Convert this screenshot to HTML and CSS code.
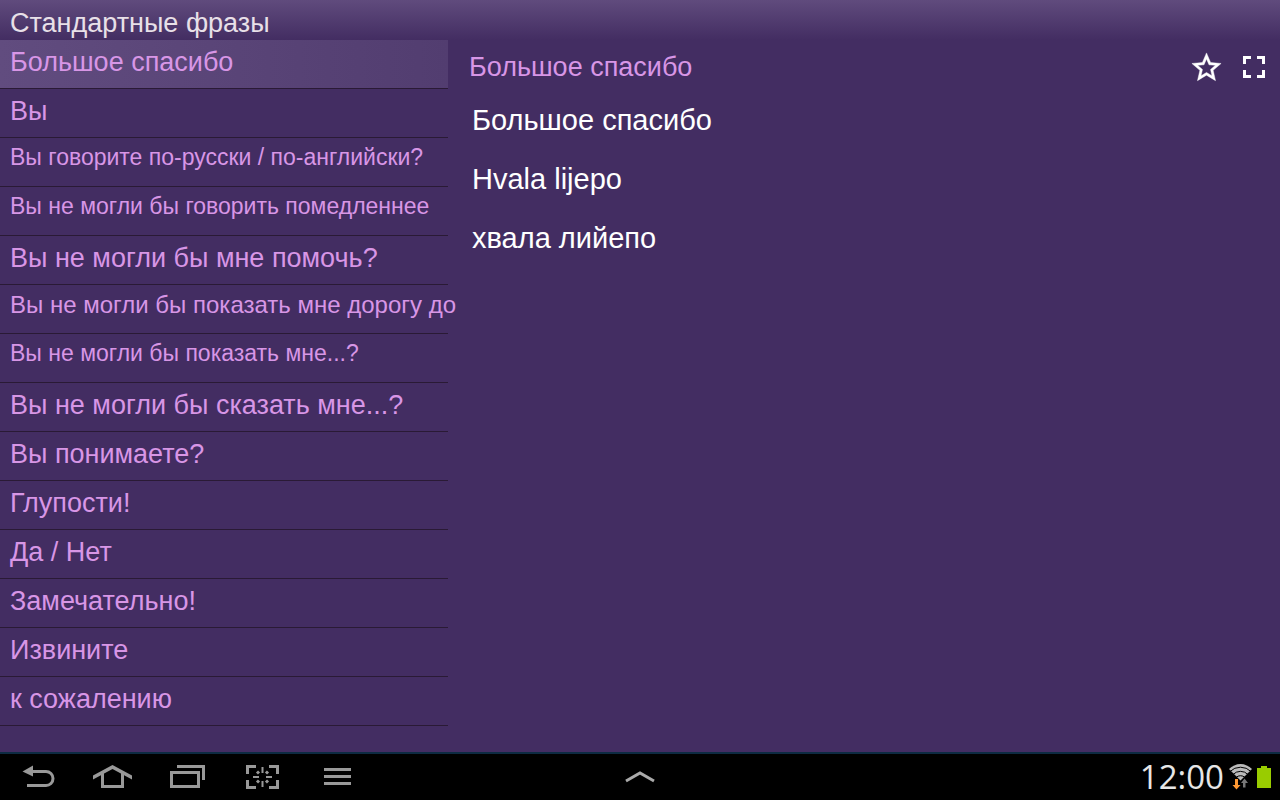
FILE: index.html
```html
<!DOCTYPE html>
<html lang="ru">
<head>
    <meta charset="UTF-8">
    <meta name="viewport" content="width=device-width, initial-scale=1.0">
    <link rel="stylesheet" href="styles.css">
    <title>Стандартные фразы</title>
</head>
<body>
    <header class="app-header">
        <h1>Стандартные фразы</h1>
    </header>
    <main class="content">
        <nav class="phrases">
            <ul>
                <li><a href="#" class="active">Большое спасибо</a></li>
                <li><a href="#">Вы</a></li>
                <li><a href="#" class="small">Вы говорите по-русски / по-английски?</a></li>
                <li><a href="#" class="small">Вы не могли бы говорить помедленнее</a></li>
                <li><a href="#">Вы не могли бы мне помочь?</a></li>
                <li><a href="#" class="medium">Вы не могли бы показать мне дорогу до</a></li>
                <li><a href="#" class="small">Вы не могли бы показать мне...?</a></li>
                <li><a href="#">Вы не могли бы сказать мне...?</a></li>
                <li><a href="#">Вы понимаете?</a></li>
                <li><a href="#">Глупости!</a></li>
                <li><a href="#">Да / Нет</a></li>
                <li><a href="#">Замечательно!</a></li>
                <li><a href="#">Извините</a></li>
                <li><a href="#">к сожалению</a></li>
            </ul>
        </nav>
        <section class="detail">
            <div class="detail-header">
                <h2>Большое спасибо</h2>
                <button type="button" aria-label="В избранное">
                    <svg width="35" height="35" viewBox="0 0 24 24" fill="#fff" stroke="#fff" stroke-width=".3"><path d="M22 9.24l-7.19-.62L12 2 9.19 8.63 2 9.24l5.46 4.73L5.82 21 12 17.27 18.18 21l-1.63-7.03L22 9.24zM12 15.4l-3.76 2.27 1-4.28-3.32-2.88 4.38-.38L12 6.1l1.71 4.04 4.38.38-3.32 2.88 1 4.28L12 15.4z"/></svg>
                </button>
                <button type="button" aria-label="На весь экран">
                    <svg width="22" height="22" viewBox="0 0 22 22" fill="none" stroke="#fff" stroke-width="3"><path d="M1.5 8V1.5H8M14 1.500h6.5V8M20.5 14v6.5H14M8 20.5H1.5V14"/></svg>
                </button>
            </div>
            <div class="translation">
                <p>Большое спасибо</p>
                <p>Hvala lijepo</p>
                <p>хвала лийепо</p>
            </div>
        </section>
    </main>
    <footer class="system-bar">
        <div class="nav-buttons">
            <button type="button" aria-label="Назад">
                <svg width="39" height="28" viewBox="0 0 39 28">
                    <path d="M13 8.5H28a7 7 0 0 1 0 14H9" fill="none" stroke="#999" stroke-width="3"/>
                    <path d="M4.5 8.5L15 2.5v11z" fill="#999"/>
                </svg>
            </button>
            <button type="button" aria-label="Домой">
                <svg width="39" height="28" viewBox="0 0 39 28">
                    <path d="M0 12.5L19.5 2 39 12.5v4L19.5 6 0 16.5z" fill="#999"/>
                    <path d="M9.5 10v13.5h20V10" fill="none" stroke="#999" stroke-width="3"/>
                </svg>
            </button>
            <button type="button" aria-label="Недавние">
                <svg width="39" height="28" viewBox="0 0 39 28" fill="none" stroke="#999" stroke-width="3">
                    <path d="M3.5 9.5h27v14h-27zM9 3.5h26.500V17"/>
                </svg>
            </button>
            <button type="button" aria-label="Снимок экрана">
                <svg width="39" height="28" viewBox="0 0 39 28" fill="none" stroke="#999">
                    <path d="M4.5 11V3.5H13M26 3.5h8.500V11M34.5 17v7.500H26M13 24.500H4.5V17" stroke-width="3"/>
                    <path d="M19.5 4v6M19.5 18v6M10 14h6M23 14h6" stroke-width="2"/>
                    <path d="M14 8.500l2 2M25 8.500l-2 2M14 19.500l2-2M25 19.500l-2-2" stroke-width="3"/>
                </svg>
            </button>
            <button type="button" aria-label="Меню">
                <svg width="39" height="28" viewBox="0 0 39 28" fill="#999">
                    <path d="M6 5h27v3H6zM6 12h27v3H6zM6 19h27v3H6z"/>
                </svg>
            </button>
        </div>
        <button type="button" aria-label="Развернуть">
            <svg width="32" height="14" viewBox="0 0 32 14" fill="none" stroke="#aaa" stroke-width="3">
                <path d="M2 11L16 3l14 8"/>
            </svg>
        </button>
        <div class="status">
            <time>12:00</time>
            <svg width="23" height="26" viewBox="0 0 23 26">
                <path d="M0 5a16 16 0 0 1 23 0L11.5 16.500z" fill="#bbb"/>
                <path d="M1 7.500a15 15 0 0 1 21 0M4 10.500a10.500 10.500 0 0 1 15 0M7 13.500a6.500 6.500 0 0 1 9 0" fill="none" stroke="#000"/>
                <path d="M6 15h3v6h2.500l-4 4.500-4-4.500H6z" fill="#f93"/>
                <path d="M14 23.500h2.500V19H19l-3.500-4.500L12 19h2z" fill="#777"/>
            </svg>
            <svg width="14" height="22" viewBox="0 0 14 22" fill="#9c0">
                <path d="M0 2h4V0h6v2h4v20H0z"/>
            </svg>
        </div>
    </footer>
</body>
</html>
```
FILE: styles.css
```css
* {
    box-sizing: border-box;
}

body {
    margin: 0;
    min-height: 100vh;
    display: flex;
    flex-direction: column;
    background-color: #432d62;
    color: #fff;
    font-family: "Liberation Sans", Arial, sans-serif;
    font-size: 27px;
}

h1, h2, p, ul {
    margin: 0;
    padding: 0;
    font-size: inherit;
    font-weight: normal;
}

button {
    display: flex;
    align-items: center;
    justify-content: center;
    padding: 0;
    border: none;
    background: none;
    cursor: pointer;
}

.app-header {
    padding: 6px 10px 0;
    line-height: 34px;
    color: #e8e0e8;
    background: linear-gradient(#604b7d, #432d62);
}

.content {
    flex: 1;
    display: grid;
    grid-template-columns: 35% 1fr;
}

/* phrase list */
.phrases ul {
    list-style: none;
}

.phrases a {
    display: block;
    height: 49px;
    padding-left: 10px;
    border-bottom: 1px solid #2a1a35;
    line-height: 44px;
    white-space: nowrap;
    color: #d896e6;
    text-decoration: none;
}

.phrases .small {
    font-size: 23px;
    line-height: 38px;
}

.phrases .medium {
    font-size: 24px;
    line-height: 40px;
}

.phrases .active {
    background: linear-gradient(to right, #614c7f, #523d70);
}

/* selected phrase */
.detail-header {
    display: flex;
    align-items: center;
    height: 54px;
    padding: 0 2px 0 21px;
    color: #d896e6;
}

.detail-header h2 {
    flex: 1;
}

.detail-header button {
    width: 48px;
    height: 48px;
}

.translation {
    display: flex;
    flex-direction: column;
    gap: 27px;
    padding: 10px 24px;
    font-size: 29px;
    line-height: 32px;
}

/* bottom bar */
.system-bar {
    display: grid;
    grid-template-columns: 1fr auto 1fr;
    align-items: center;
    height: 48px;
    border-top: 2px solid #0d2b42;
    background-color: #000;
}

.nav-buttons {
    display: flex;
}

.nav-buttons button {
    width: 75px;
    height: 46px;
}

.status {
    display: flex;
    align-items: center;
    justify-content: flex-end;
    gap: 5px;
    padding-right: 9px;
}

.status time {
    font-family: "Open Sans", "Noto Sans", sans-serif;
    font-size: 33px;
    line-height: 46px;
    color: #e6e6e6;
}
```
